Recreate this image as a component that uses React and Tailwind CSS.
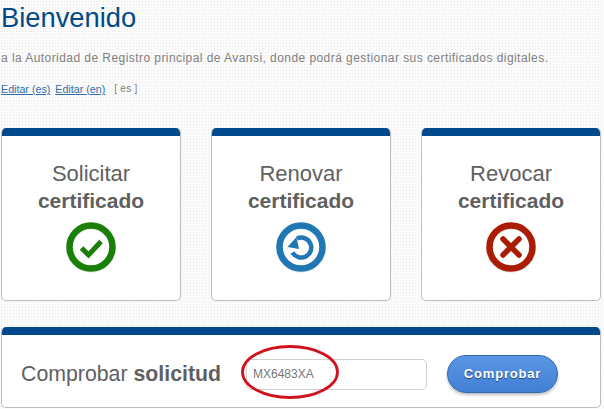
import { useState } from "react";

const cards = [
  { title: "Solicitar", icon: "check", color: "#1a7f06" },
  { title: "Renovar", icon: "renew", color: "#1f78b4" },
  { title: "Revocar", icon: "cross", color: "#ab1c04" },
];

function StatusIcon({ icon, color }) {
  return (
    <svg width="52" height="52" viewBox="0 0 52 52" className="mx-auto mt-[7px] block">
      <circle cx="26" cy="27" r="21.5" fill="none" stroke="#d9d9d9" strokeWidth="6.5" opacity="0.6" />
      <circle cx="26" cy="26" r="21.5" fill="none" stroke={color} strokeWidth="6.5" />
      {icon === "check" && <path d="M16.5 27l7 7L36 20.5" fill="none" stroke={color} strokeWidth="5" />}
      {icon === "cross" && (
        <path d="M18 18l16 16M34 18L18 34" fill="none" stroke={color} strokeWidth="5.5" strokeLinecap="round" />
      )}
      {icon === "renew" && (
        <>
          <path d="M22 17.5A10 10 0 1 1 17.5 31.5" fill="none" stroke={color} strokeWidth="4.5" />
          <path d="M12.5 26l9-10 2.5 12z" fill={color} />
        </>
      )}
    </svg>
  );
}

export default function App() {
  const [code, setCode] = useState("MX6483XA");

  return (
    <div className="relative h-[409px] w-[604px] overflow-hidden bg-[#fbfbfb] bg-[radial-gradient(#e9e9e9_0.7px,transparent_0.8px)] bg-[length:3px_3px] font-['Liberation_Sans',Arial,sans-serif]">
      <header className="pl-[1px]">
        <h1 className="text-[27.3px] leading-[36px] text-[#004a8c]">Bienvenido</h1>
        <p className="mt-[13px] text-[12px] leading-[18px] tracking-[0.44px] text-[#808080]">
          a la Autoridad de Registro principal de Avansi, donde podrá gestionar sus certificados digitales.
        </p>
        <div className="mt-[15px] flex text-[10.7px] leading-[14px] text-[#808080]">
          <a href="#es" className="text-[#2f6ea8] underline">Editar (es)</a>
          <a href="#en" className="ml-[5px] text-[#2f6ea8] underline">Editar (en)</a>
          <span className="ml-[9px] text-[10px] tracking-[0.3px]">[ es ]</span>
        </div>
      </header>

      <section className="ml-[1px] mt-[32px] grid w-[600px] grid-cols-3 gap-[30px]">
        {cards.map((card) => (
          <article
            key={card.title}
            className="h-[173px] overflow-hidden rounded-[5px] border border-[#bdbdbd] border-t-0 bg-white text-center text-[#5f5f5f]"
          >
            <div className="h-[8px] bg-[#004a8c]" />
            <h2 className="mt-[25px] text-[22px] leading-[26px]">{card.title}</h2>
            <p className="text-[21px] font-bold leading-[27px]">certificado</p>
            <StatusIcon icon={card.icon} color={card.color} />
          </article>
        ))}
      </section>

      <section className="ml-[1px] mt-[26px] h-[81px] w-[600px] overflow-hidden rounded-[5px] border border-t-0 border-[#bdbdbd] bg-white">
        <div className="h-[8px] bg-[#004a8c]" />
        <div className="flex items-center pl-[19px] pt-[20px]">
          <h2 className="w-[225px] text-[21.3px] leading-[38px] text-[#5f5f5f]">
            Comprobar <strong>solicitud</strong>
          </h2>
          <input
            value={code}
            onChange={(event) => setCode(event.target.value)}
            className="h-[31px] w-[181px] rounded-[5px] border border-[#d0d0d0] bg-white px-[6px] text-[12px] text-[#777777] outline-none"
          />
          <button className="ml-[20px] h-[38px] w-[111px] rounded-full border border-[#2f68ad] bg-gradient-to-b from-[#5a96e4] to-[#4280d6] text-[13px] font-bold tracking-[0.8px] text-white shadow-[0_2px_3px_rgba(0,0,0,0.25)] [text-shadow:0_1px_1px_rgba(0,0,0,0.5)]">
            Comprobar
          </button>
        </div>
      </section>

      <svg width="604" height="409" className="pointer-events-none absolute left-0 top-0">
        <ellipse cx="290" cy="372" rx="47.5" ry="25.5" fill="none" stroke="#d0121f" strokeWidth="2.8" />
      </svg>
    </div>
  );
}
